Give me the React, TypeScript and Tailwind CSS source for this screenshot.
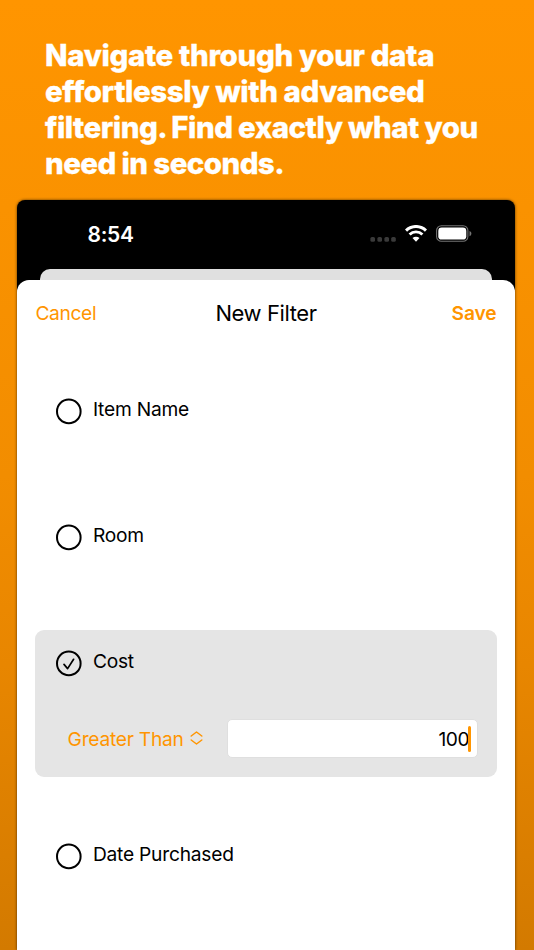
import React from 'react';

function RadioIcon({ checked = false }: { checked?: boolean }) {
  return (
    <svg width="26" height="27" viewBox="0 0 26 27" fill="none" stroke="black" className="shrink-0">
      <circle cx="12.8" cy="13.4" r="11.8" strokeWidth="2" />
      {checked && (
        <path d="M8 14.4l3.6 4.2 6-9.3" strokeWidth="1.7" strokeLinecap="round" strokeLinejoin="round" />
      )}
    </svg>
  );
}

function FilterOption({ label, checked }: { label: string; checked?: boolean }) {
  return (
    <div className="flex h-[26px] items-start">
      <RadioIcon checked={checked} />
      <span className="ml-[10.9px] mt-[-1px] leading-6 text-[19.2px] tracking-[-0.22px] whitespace-nowrap">{label}</span>
    </div>
  );
}

function StatusBar() {
  return (
    <div className="flex h-[69px] items-start justify-between pl-[70.5px] pr-[43px] pt-[22px] text-white">
      <span className="mt-[1px] text-[21px] leading-6 font-semibold tracking-[-0.3px]">8:54</span>
      <div className="flex pt-[1px]">
        <svg width="26" height="5" viewBox="0 0 26 5" className="mt-[14px]" fill="#3a3a3a">
          <rect x="0.4" width="4.6" height="4.8" rx="1.6" />
          <rect x="7.4" width="4.6" height="4.8" rx="1.6" />
          <rect x="14.4" width="4.6" height="4.8" rx="1.6" />
          <rect x="21.2" width="4.6" height="4.8" rx="1.6" />
        </svg>
        <svg width="22" height="17" viewBox="0 0 22 17" className="ml-[9px] mt-[2px]" fill="none" stroke="white">
          <path d="M1 5.6a14.3 14.3 0 0 1 20 0" strokeWidth="3.1" />
          <path d="M4.6 9.5a9.1 9.1 0 0 1 12.8 0" strokeWidth="2.9" />
          <path d="M11 16.7l-3.5-3.6a4.9 4.9 0 0 1 7 0z" fill="white" stroke="none" />
        </svg>
        <svg width="36" height="17" viewBox="0 0 36 17" className="ml-[9px] mt-[2px]" fill="none">
          <rect x="0.6" y="0.7" width="31.3" height="15.6" rx="4.8" stroke="#737373" strokeWidth="1.1" />
          <rect x="2.3" y="2.5" width="28" height="12.1" rx="3.4" fill="white" />
          <path d="M33.5 5.9c1.2.4 1.9 1.5 1.9 2.7s-.7 2.3-1.9 2.7z" fill="#737373" />
        </svg>
      </div>
    </div>
  );
}

export default function App() {
  return (
    <main className="flex h-[950px] w-[534px] flex-col overflow-hidden bg-[linear-gradient(#ff9500_0%,#fa9200_22%,#f28d00_50%,#e88600_70%,#d37a00_100%)] font-[Inter,sans-serif] text-black">
      {/* Headline */}
      <h1 className="h-[200px] shrink-0 pl-[45px] pt-[38.4px] text-[29.5px] leading-[35.7px] font-extrabold whitespace-nowrap text-white [-webkit-text-stroke:0.3px_white]">
        <span className="block tracking-[-0.36px]">Navigate through your data</span>
        <span className="block tracking-[-0.44px]">effortlessly with advanced</span>
        <span className="block tracking-[-0.49px] [word-spacing:-0.4px]">
          <span className="mr-[-1.5px]">filtering.</span> Find exactly what you
        </span>
        <span className="block tracking-[-0.58px]">need in seconds.</span>
      </h1>

      {/* Phone */}
      <div className="ml-[17px] flex w-[498px] flex-1 flex-col overflow-hidden rounded-t-[8px] bg-black shadow-[0_0_3px_rgba(0,0,0,0.65)]">
        <StatusBar />
        <div className="mx-[23px] h-[11px] shrink-0 rounded-t-[10px] bg-[#e0e0e0]" />
        <section className="flex-1 rounded-t-[12px] bg-white pl-[18.4px] pr-[18.4px]">
          <header className="grid grid-cols-3 items-center pt-[20px] leading-[26px] whitespace-nowrap">
            <span className="text-[19.2px] tracking-[-0.35px] text-[#ff9500]">Cancel</span>
            <span className="text-center text-[22px] tracking-[-0.42px]">New Filter</span>
            <span className="text-right text-[19.2px] font-semibold tracking-[-0.1px] text-[#ff9500]">Save</span>
          </header>

          <div className="pl-[20.6px] pt-[72px]">
            <FilterOption label="Item Name" />
          </div>
          <div className="pl-[20.6px] pt-[100px]">
            <FilterOption label="Room" />
          </div>

          <div className="mt-[80px] h-[147px] rounded-[9px] bg-[#e5e5e5] pl-[20.6px] pr-[19px] pt-[20px]">
            <FilterOption label="Cost" checked />
            <div className="mt-[43px] flex h-[39px] items-center justify-between pl-[11.6px]">
              <div className="flex items-center text-[#ff9500]">
                <span className="mt-[1px] text-[19.2px] tracking-[-0.25px] whitespace-nowrap">Greater Than</span>
                <svg width="13" height="14" viewBox="0 0 13 14" className="ml-[6px]" fill="none" stroke="currentColor" strokeWidth="1.5" strokeLinecap="round" strokeLinejoin="round">
                  <path d="M1.2 5l5.3-4 5.3 4M1.2 9l5.3 4 5.3-4" />
                </svg>
              </div>
              <div className="flex h-[39px] w-[250.4px] items-center justify-end rounded-[5px] border border-[#dfdfdf] bg-white pr-[6px]">
                <span className="mt-[1px] text-[19.2px] tracking-[-0.4px]">100</span>
                <span className="ml-[-1px] h-[26px] w-[2.4px] rounded-full bg-[#ff9500]" />
              </div>
            </div>
          </div>

          <div className="pl-[20.6px] pt-[66px]">
            <FilterOption label="Date Purchased" />
          </div>
        </section>
      </div>
    </main>
  );
}
